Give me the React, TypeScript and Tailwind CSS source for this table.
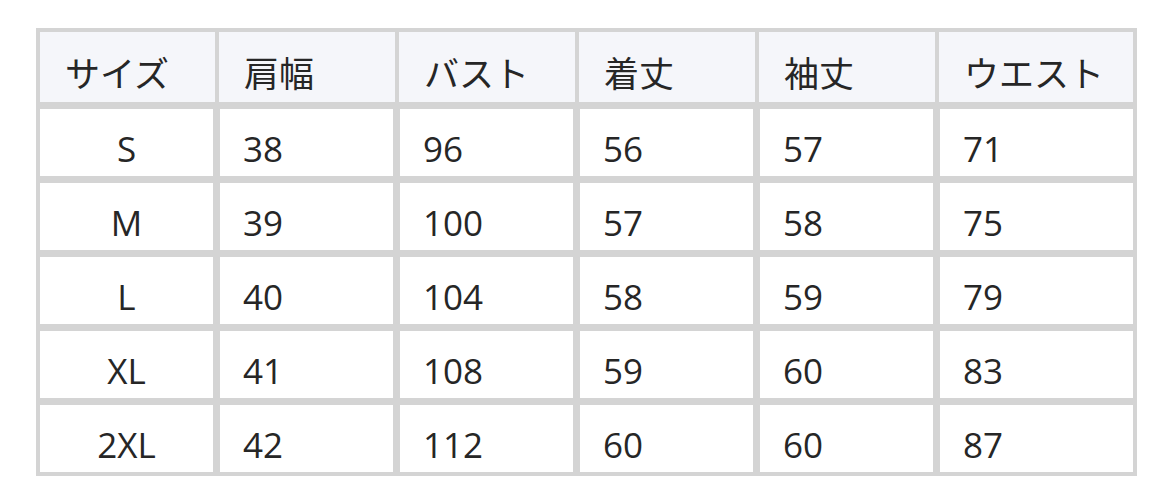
import React from "react";

const headers = ["サイズ", "肩幅", "バスト", "着丈", "袖丈", "ウエスト"];

const rows = [
  ["S", "38", "96", "56", "57", "71"],
  ["M", "39", "100", "57", "58", "75"],
  ["L", "40", "104", "58", "59", "79"],
  ["XL", "41", "108", "59", "60", "83"],
  ["2XL", "42", "112", "60", "60", "87"],
];

const font = { fontFamily: '"Open Sans", "Noto Sans CJK JP", sans-serif' };

export default function App() {
  return (
    <div className="min-h-[503px] w-[1172px] bg-white pl-[36px] pt-[28px]" style={font}>
      <div className="flex w-[1101px] flex-col gap-[7px] bg-[#d4d4d4] p-[4px] text-[35px] leading-none text-[#262626]">
        <div className="grid h-[70px] grid-cols-[175px_176px_176px_176px_176px_1fr] gap-x-[4px]">
          {headers.map((h) => (
            <div key={h} className="flex items-center bg-[#f5f6fa] pl-[25px] pt-[13px]">
              {h}
            </div>
          ))}
        </div>

        {rows.map((row) => (
          <div key={row[0]} className="grid h-[67px] grid-cols-[173px_173px_173px_173px_173px_1fr] gap-x-[7px]">
            {row.map((cell, i) => (
              <div
                key={i}
                className={
                  i === 0
                    ? "flex items-center justify-center bg-white pt-[12px]"
                    : "flex items-center bg-white pl-[23px] pt-[12px]"
                }
              >
                {cell}
              </div>
            ))}
          </div>
        ))}
      </div>
    </div>
  );
}
